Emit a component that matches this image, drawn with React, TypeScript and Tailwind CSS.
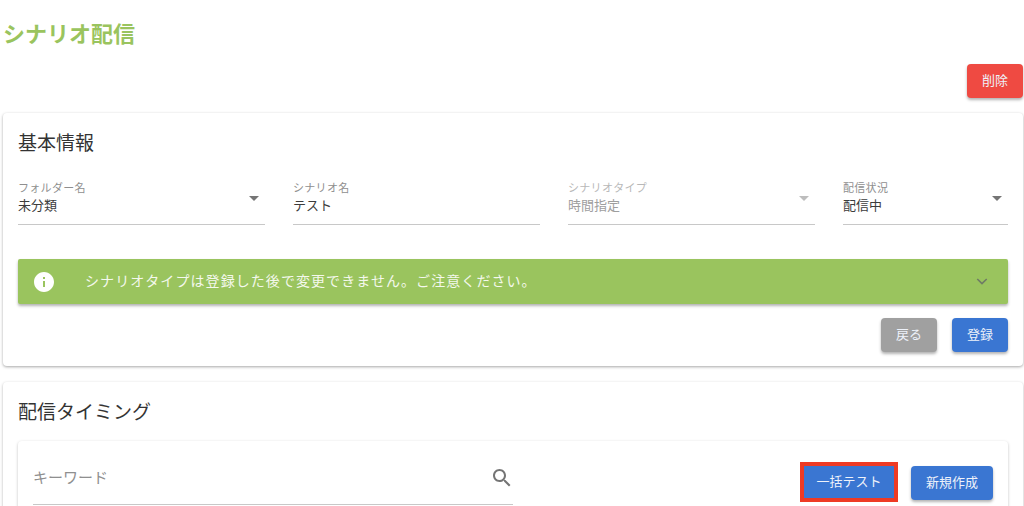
import React from "react";

const font = { fontFamily: '"Roboto","Noto Sans CJK JP",sans-serif' };

function Caret({ disabled }: { disabled?: boolean }) {
  return (
    <svg width="24" height="24" viewBox="0 0 24 24" className="absolute right-[-1px] top-[7px]" fill={disabled ? "rgba(0,0,0,0.26)" : "rgba(0,0,0,0.54)"}>
      <path d="M7 10l5 5 5-5z" />
    </svg>
  );
}

function Field({ label, value, select, disabled, className }: { label: string; value: string; select?: boolean; disabled?: boolean; className: string }) {
  return (
    <div className={`relative h-[46px] border-b border-[#c8c8c8] ${className}`}>
      <div className={`text-[11px] leading-[14px] mt-[3px] tracking-[0.3px] ${disabled ? "text-[#b8b8b8]" : "text-[#8f8f8f]"}`}>{label}</div>
      <div className={`text-[13px] leading-[20px] mt-0 ${disabled ? "text-[#9e9e9e]" : "text-[#3c3c3c]"}`}>{value}</div>
      {select && <Caret disabled={disabled} />}
    </div>
  );
}

function Btn({ children, className }: { children: React.ReactNode; className: string }) {
  return (
    <button className={`flex items-center justify-center rounded-[4px] text-[13px] text-[#eef2fa] shadow-[0_2px_3px_rgba(0,0,0,0.3)] ${className}`}>
      {children}
    </button>
  );
}

export default function App() {
  return (
    <div style={font} className="h-[506px] w-[1024px] overflow-hidden bg-white pl-[3px] pr-px">
      <h1 className="pt-[21px] text-[22px] leading-[28px] font-bold text-[#9ac45e]">シナリオ配信</h1>
      <div className="mt-[15px] flex justify-end">
        <Btn className="h-[34px] w-[56px] bg-[#ef4a42]">削除</Btn>
      </div>
      <section className="mt-[15px] h-[253px] rounded-[4px] bg-white px-[15px] pt-[17px] shadow-[0_1px_3px_rgba(0,0,0,0.35)]">
        <h2 className="text-[19px] leading-[28px] text-[#333]">基本情報</h2>
        <div className="mt-[21px] flex gap-[28px]">
          <Field className="w-[247px]" label="フォルダー名" value="未分類" select />
          <Field className="w-[247px]" label="シナリオ名" value="テスト" />
          <Field className="w-[247px]" label="シナリオタイプ" value="時間指定" select disabled />
          <Field className="w-[165px]" label="配信状況" value="配信中" select />
        </div>
        <div className="mt-[34px] flex h-[45px] items-center rounded-[2px] bg-[#9ac45e] pl-[16px] pr-[20px] shadow-[0_2px_3px_rgba(0,0,0,0.3)]">
          <svg width="20" height="20" viewBox="2 2 20 20" fill="#fff">
            <path d="M12 2C6.48 2 2 6.48 2 12s4.48 10 10 10 10-4.48 10-10S17.52 2 12 2zm1 15h-2v-6h2v6zm0-8h-2V7h2v2z" />
          </svg>
          <span className="ml-[31px] text-[14px] tracking-[1.07px] text-[#f4f8ec]">シナリオタイプは登録した後で変更できません。ご注意ください。</span>
          <svg className="ml-auto" width="12" height="9" viewBox="0 0 14 10" fill="none" stroke="#6f7a66" strokeWidth="1.8">
            <path d="M1.5 2l5.5 5.5L12.5 2" />
          </svg>
        </div>
        <div className="mt-[14px] flex justify-end gap-[15px]">
          <Btn className="h-[34px] w-[56px] bg-[#a0a0a0]">戻る</Btn>
          <Btn className="h-[34px] w-[56px] bg-[#3a76d2]">登録</Btn>
        </div>
      </section>
      <section className="mt-[16px] h-[200px] rounded-[4px] bg-white px-[15px] pt-[17px] shadow-[0_1px_3px_rgba(0,0,0,0.3)]">
        <h2 className="text-[19px] leading-[28px] text-[#333]">配信タイミング</h2>
        <div className="mt-[14px] flex h-[120px] items-start rounded-[4px] px-[15px] pt-[20px] shadow-[0_1px_3px_rgba(0,0,0,0.25)]">
          <div className="flex h-[44px] w-[480px] items-start justify-between border-b border-[#c8c8c8] pt-[7px]">
            <span className="text-[15px] leading-[20px] text-[#8f8f8f]">キーワード</span>
            <svg width="24" height="24" viewBox="0 0 24 24" fill="#757575" className="-mt-[2px] mr-[-1px]">
              <path d="M15.5 14h-.79l-.28-.27C15.41 12.59 16 11.11 16 9.5 16 5.91 13.09 3 9.5 3S3 5.91 3 9.5 5.91 16 9.5 16c1.61 0 3.09-.59 4.23-1.57l.27.28v.79l5 4.99L20.49 19l-4.99-5zm-6 0C7.01 14 5 11.99 5 9.5S7.01 5 9.5 5 14 7.01 14 9.5 11.99 14 9.5 14z" />
            </svg>
          </div>
          <div className="ml-auto flex items-start gap-[13px]">
            <div className="mt-[1px] border-[4px] border-[#ee3a24]">
              <Btn className="h-[32px] w-[90px] bg-[#3a76d2] !shadow-none !rounded-none">一括テスト</Btn>
            </div>
            <Btn className="mt-[5px] h-[34px] w-[82px] bg-[#3a76d2]">新規作成</Btn>
          </div>
        </div>
      </section>
    </div>
  );
}
